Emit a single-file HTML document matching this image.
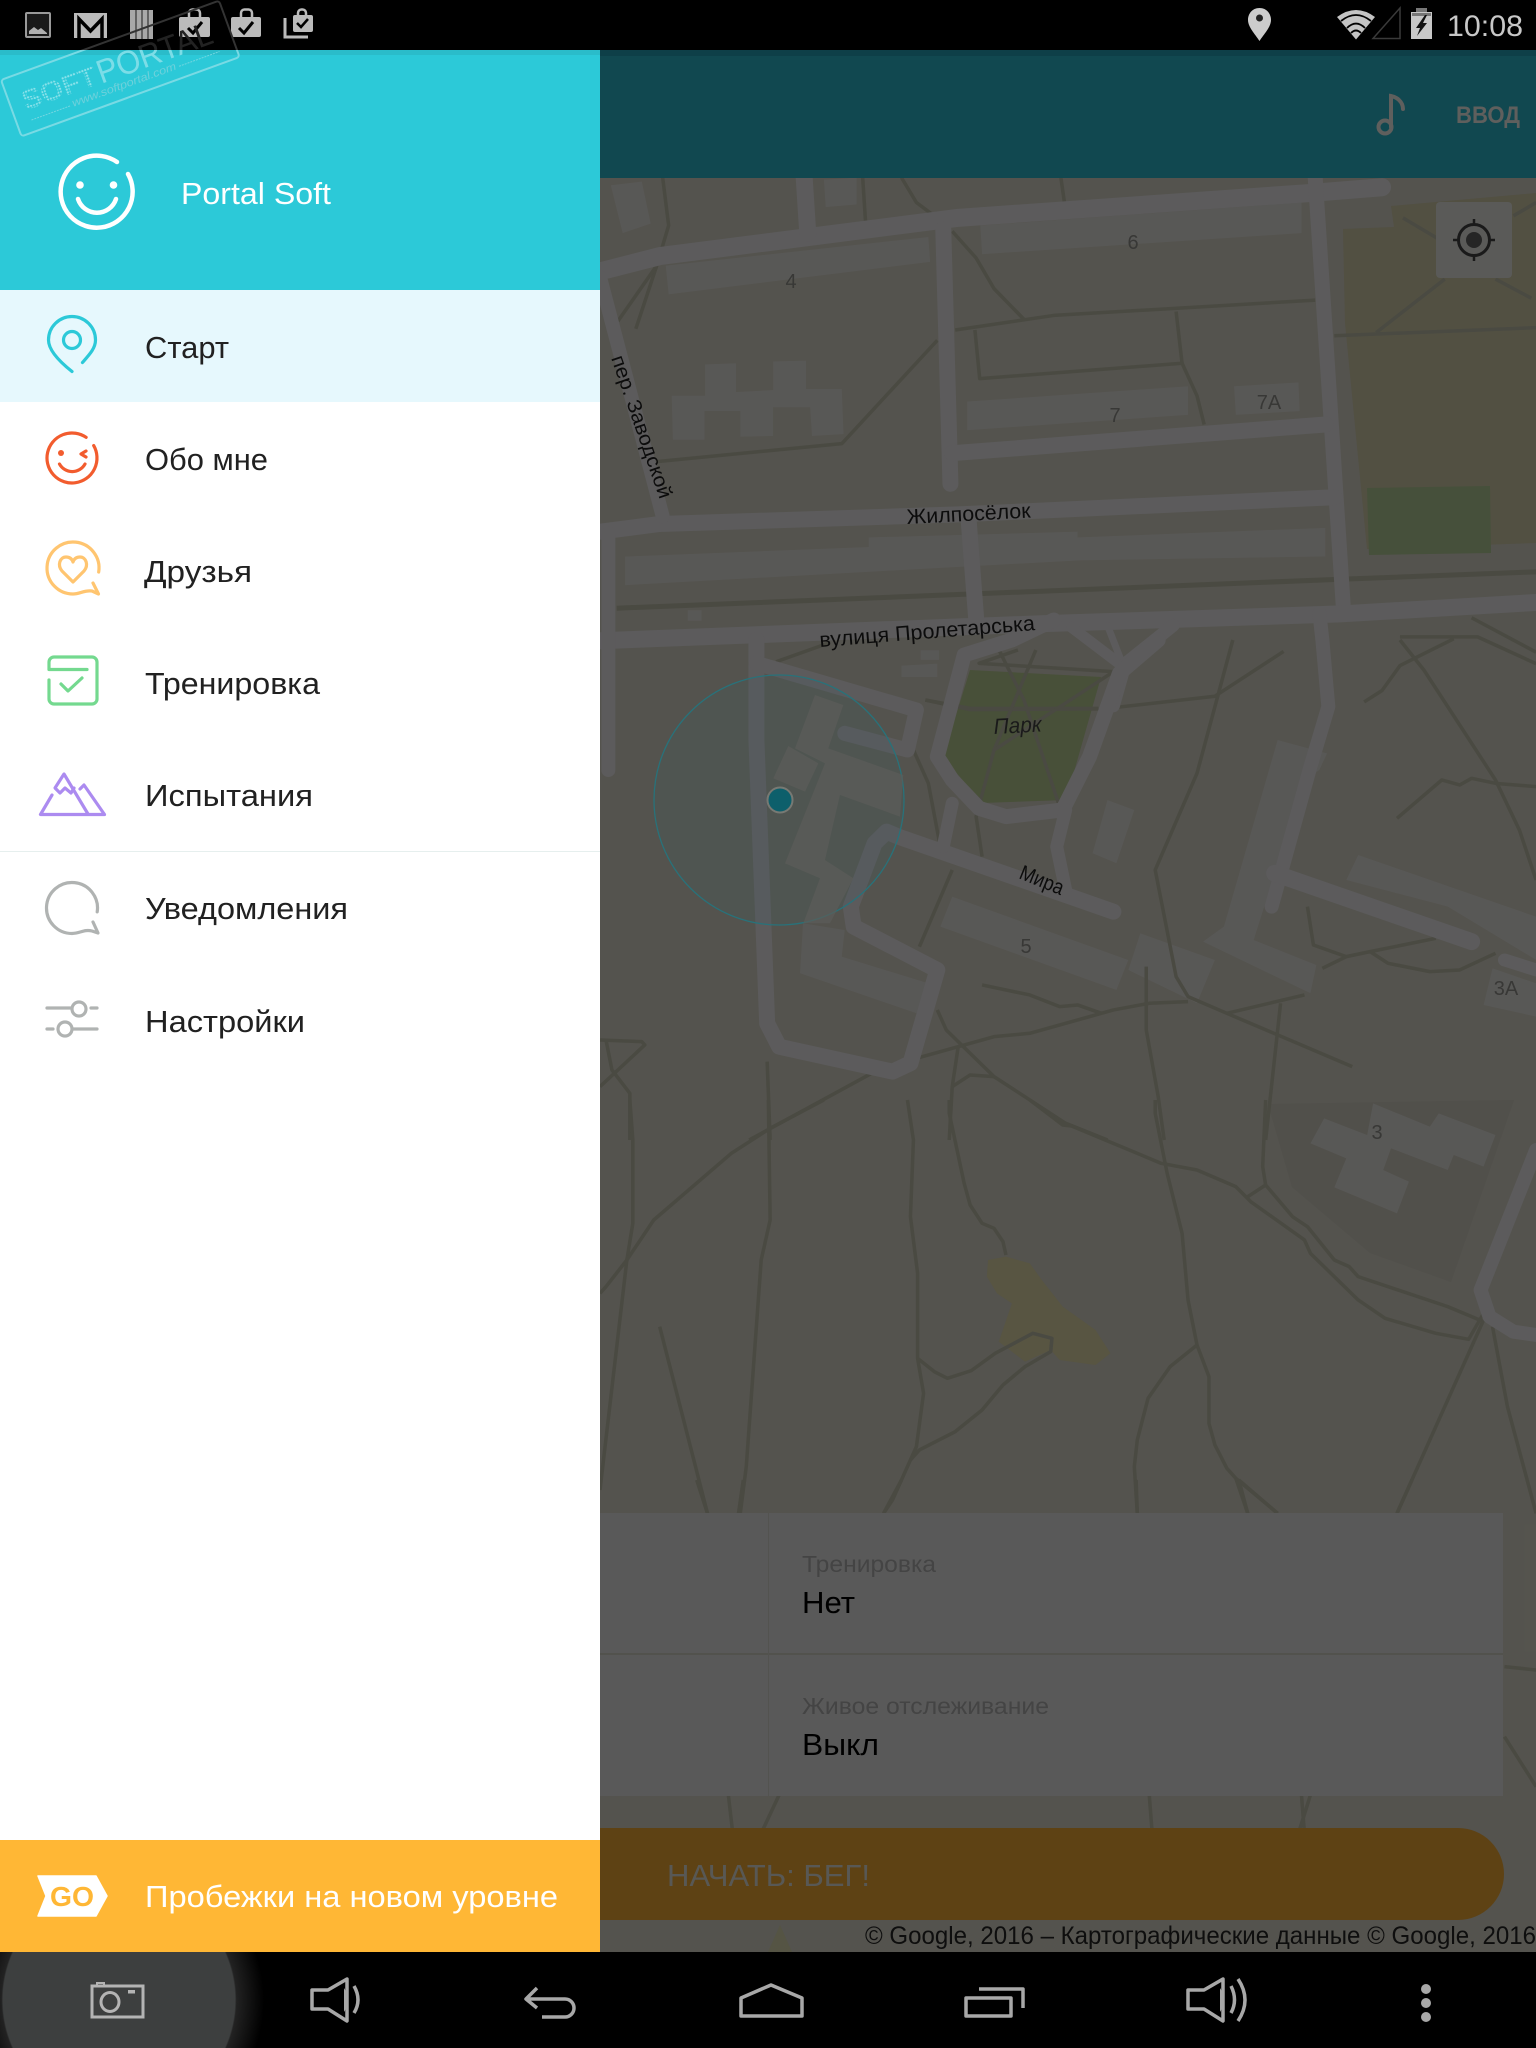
<!DOCTYPE html>
<html><head><meta charset="utf-8"><style>
html,body{margin:0;padding:0;background:#000}
svg{display:block}
text{font-family:"Liberation Sans",sans-serif}
.m polyline,.m path,.m line{fill:none;vector-effect:non-scaling-stroke;stroke-linejoin:round}
.r polyline,.r line,.r path{stroke:#676667;stroke-linecap:round}
.p polyline{stroke:#53534a;stroke-width:3.5}
.b polygon{fill:#636260}
.i{fill:#212121;font-size:31px}
</style></head><body>
<svg width="1536" height="2048" viewBox="0 0 1536 2048" xmlns="http://www.w3.org/2000/svg">
<defs>
<clipPath id="cm"><rect x="600" y="178" width="936" height="1774"/></clipPath>
<clipPath id="cn"><rect x="0" y="1952" width="1536" height="96"/></clipPath>
<clipPath id="clow"><rect x="0" y="50" width="600" height="120"/></clipPath>
<clipPath id="chigh"><rect x="0" y="0" width="600" height="50"/></clipPath>
<radialGradient id="glow" gradientUnits="userSpaceOnUse" cx="119" cy="2000" r="145">
<stop offset="0" stop-color="#3d3f3f"/><stop offset=".8" stop-color="#3d3f3f"/><stop offset=".81" stop-color="#222"/><stop offset="1" stop-color="#000"/></radialGradient>
<pattern id="dots" width="3" height="3" patternUnits="userSpaceOnUse"><rect width="3" height="3" fill="#2cc9d8"/><circle cx="1.500" cy="1.500" r="1.150" fill="#8be2ea"/></pattern>
</defs>
<rect width="1536" height="2048" fill="#000"/>

<!-- MAP -->
<g clip-path="url(#cm)" class="m">
<rect x="600" y="178" width="936" height="1774" fill="#5e5d57"/>
<polygon points="1391,206 1536,193 1536,543 1367,549 1345,323 1343,229 1394,227" fill="#5c5a4a"/>
<polygon points="1367,488 1490,486 1491,553 1369,555" fill="#4f5a42"/>
<polygon points="970,670 1101,677 1066,800 982,803 943,757" fill="#515a40"/>
<polygon points="1268,1104 1292,1187 1370,1253 1451,1282 1514,1100" fill="#5b5a54"/>

<!-- zoom 7 space -->
<g transform="translate(600,170) scale(.597,.3827)">
<g class="b">
<polygon points="637,145 1175,85 1175,165 640,220"/>
<polygon points="110,250 550,175 553,240 115,325"/>
<polygon points="120,590 176,590 176,508 228,505 228,580 290,575 290,500 345,498 345,572 405,572 408,690 355,695 352,620 290,620 290,695 235,697 235,630 175,630 175,705 122,705"/>
<polygon points="615,605 985,565 985,640 615,680"/>
<polygon points="1062,565 1170,555 1172,630 1065,640"/>
<polygon points="42,1010 450,985 450,960 800,945 800,960 1215,935 1215,1010 805,1020 450,1050 42,1085"/>
<polygon points="147,1150 170,1150 170,1178 147,1178"/>
<polygon points="505,1295 565,1290 565,1325 505,1325"/>
<polygon points="537,1255 568,1255 568,1280 537,1280"/>
<polygon points="18,40 70,30 85,140 38,165"/>
<polygon points="375,25 430,20 430,90 378,97"/>
</g>
<g class="p">
<polyline points="105,20 115,145 95,250 60,415"/>
<polyline points="95,250 30,395"/>
<polyline points="505,20 530,85 560,120"/>
<polyline points="772,20 778,85"/>
<polyline points="440,20 445,140"/>
<polyline points="590,160 630,230 660,310 710,390"/>
<polyline points="595,418 760,380 1198,340"/>
<polyline points="628,418 636,545 975,505 965,370"/>
<polyline points="975,505 1000,590 1012,665"/>
<polyline points="565,445 405,715 95,762"/>
<polyline points="1230,433 1568,412"/>
<polyline points="1345,125 1415,190"/>
<polyline points="1300,425 1415,285"/>
<polyline points="1500,285 1560,335"/>
<polyline points="1568,85 1530,120"/>
<polyline points="28,1145 1230,1070 1568,1050" style="stroke-width:5"/>
<polyline points="295,1285 385,1235"/>
<polyline points="1145,1258 1030,1375 860,1405"/>
<polyline points="545,1385 620,1410 835,1408"/>
<polyline points="1340,1220 1470,1220 1568,1290"/>
<polyline points="1430,1225 1340,1295 1310,1360 1280,1390"/>
<polyline points="1460,1170 1568,1260"/>
</g>
<g class="r">
<polyline points="0,265 100,225 600,125 1190,60 1310,45" style="stroke-width:18"/>
<line x1="342" y1="20" x2="348" y2="165" style="stroke-width:17"/>
<line x1="575" y1="155" x2="587" y2="820" style="stroke-width:16"/>
<line x1="1198" y1="20" x2="1245" y2="1140" style="stroke-width:15"/>
<polyline points="590,740 1215,665" style="stroke-width:16"/>
<polyline points="0,945 100,925 600,900 1230,855" style="stroke-width:16"/>
<line x1="0" y1="280" x2="105" y2="905" style="stroke-width:14"/>
<polyline points="0,1230 750,1185 1240,1160 1568,1130" style="stroke-width:17"/>
<line x1="617" y1="905" x2="630" y2="1170" style="stroke-width:16"/>
<line x1="14" y1="950" x2="14" y2="1568" style="stroke-width:14"/>
<polyline points="790,1195 870,1290" style="stroke-width:11"/>
<polyline points="850,1190 875,1290" style="stroke-width:7"/>
<polyline points="960,1190 880,1290 860,1400" style="stroke-width:13"/>
</g>
</g>

<!-- zoom 8 space -->
<g transform="translate(600,640) scale(.597,.3333)">
<g class="b">
<polygon points="590,770 885,960 865,1050 570,860"/>
<polygon points="850,480 895,510 865,670 825,640"/>
<polygon points="1135,300 1218,340 1205,390 1180,420 1095,900 1200,975 1190,1060 1010,905 1045,860"/>
<polygon points="1270,645 1568,830 1568,960 1420,800 1250,720"/>
<polygon points="1495,985 1568,1030 1568,1130 1480,1095"/>
<polygon points="340,850 410,870 405,950 550,1030 530,1120 335,1000"/>
<polygon points="905,880 1030,960 1000,1090 885,990"/>
</g>
<g class="p">
<polyline points="1060,0 1000,400 930,690 965,1010 985,1070 1050,1120 1260,1280"/>
<polyline points="1340,0 1380,90 1500,420 1540,570 1568,720"/>
<polyline points="1335,535 1410,420 1440,435 1460,415 1500,430 1568,440"/>
<polyline points="1185,800 1195,915 1250,950 1290,935 1400,895"/>
<polyline points="1290,935 1320,970 1390,995 1440,990 1500,940"/>
<polyline points="1210,985 1250,950"/>
<polyline points="1050,1120 1180,1065"/>
<polyline points="1140,1090 1115,1500"/>
<polyline points="0,1200 70,1205 75,1215 0,1340"/>
<polyline points="10,1200 20,1290 50,1360 50,1500"/>
<polyline points="280,1265 285,1500"/>
<polyline points="455,1300 250,1500"/>
<polyline points="530,1255 660,1190 720,1180 860,1110 920,1090 985,1085"/>
<polyline points="565,1110 580,1170 660,1310 780,1450 850,1500"/>
<polyline points="600,1220 590,1340 620,1305 660,1310"/>
<polyline points="590,1340 585,1500"/>
<polyline points="640,1035 720,1065 770,1100 800,1095 840,1120"/>
<polyline points="915,980 915,1170 935,1370 945,1500"/>
<polyline points="545,180 620,205 835,205"/>
<polyline points="660,0 710,180 770,500"/>
<polyline points="730,30 660,330"/>
<polyline points="700,30 635,70 860,95 660,330 630,530 640,650"/>
<polyline points="525,330 550,430 570,620"/>
<polyline points="590,690 535,920"/>
</g>
<g class="r">
<polyline points="262,0 262,300 280,1150 300,1220 490,1295 520,1270 565,990 425,860 420,800 460,610 480,575 500,590 860,815" style="stroke-width:16"/>
<polyline points="262,70 530,210 515,330 410,280" style="stroke-width:15"/>
<polyline points="760,-60 690,0 610,45 565,350 590,420 635,505 680,530 775,510 820,350 870,100 935,0" style="stroke-width:15"/>
<polyline points="780,510 765,620 780,750" style="stroke-width:13"/>
<polyline points="590,490 575,620" style="stroke-width:13"/>
<polyline points="1205,-80 1210,0 1220,200 1190,380 1125,800" style="stroke-width:14"/>
<polyline points="1130,700 1460,905" style="stroke-width:17"/>
<polyline points="1515,960 1568,990" style="stroke-width:13"/>
</g>
</g>

<!-- zoom 9 space -->
<g transform="translate(600,1100) scale(.597,.3333)">
<polygon points="650,480 680,470 720,490 740,540 775,620 830,690 855,760 830,795 770,780 755,750 712,785 668,725 690,610 665,580 648,530" fill="#625f4a"/>
<polygon points="1295,10 1390,80 1405,40 1500,105 1480,200 1430,165 1420,210 1325,145 1312,210 1355,245 1335,340 1230,262 1250,175 1190,130 1213,55 1285,105" fill="#636260"/>
<g class="p">
<polyline points="1115,0 1110,200 1115,255 1160,350 1185,380 1230,480 1255,500 1270,530 1420,620 1480,665"/>
<polyline points="720,0 775,75 790,78 940,190 1000,210 1065,260 1090,305 1180,420 1190,460 1270,600 1315,655 1400,700 1455,718 1480,640"/>
<polyline points="1085,290 1115,255"/>
<polyline points="930,0 930,40 950,220 975,400 985,600 1000,735 1020,830 1020,970 1030,1035 1050,1105 1065,1135 1135,1240"/>
<polyline points="1000,735 955,800 918,895 900,1020 895,1100 900,1240"/>
<polyline points="1065,1135 1085,1240"/>
<polyline points="515,0 525,120 520,350 532,520 532,775 560,815 582,835 622,812 662,760 725,700 757,715 755,755 712,800 675,855 640,930 595,995 535,1050 520,1080 490,1200 475,1240"/>
<polyline points="532,775 542,880 530,1040 520,1080"/>
<polyline points="585,0 585,40 610,250 620,315 640,370 660,385 675,425 680,465"/>
<polyline points="50,0 55,120 55,370 45,480 0,1170"/>
<polyline points="375,0 285,85 220,160 90,360 45,480 10,560 0,580"/>
<polyline points="282,0 285,360 270,480 245,1100 235,1240"/>
<polyline points="100,680 180,1240"/>
<polyline points="1480,660 1335,1240"/>
<polyline points="1495,680 1520,920 1568,1240"/>
</g>
<g class="r">
<polyline points="1568,150 1475,570 1490,650 1530,695 1568,705" style="stroke-width:14"/>
</g>
</g>

<!-- lower map bits -->
<g transform="translate(600,1480) scale(.597,.3333)" class="p">
<polyline points="162,0 180,100"/><polyline points="240,0 232,100"/>
<polyline points="505,0 475,100"/>
<polyline points="898,0 900,100"/>
<polyline points="1070,0 1085,100"/><polyline points="1070,0 1135,100"/>
<polyline points="1360,0 1335,100"/>
<polyline points="1515,560 1568,570"/>
<polyline points="1515,770 1568,920"/>
<polyline points="215,945 225,1100"/><polyline points="300,945 270,1060"/>
<polyline points="920,945 925,1060"/>
<polyline points="1175,945 1180,1060"/><polyline points="1190,945 1170,1060"/>
</g>
<polygon points="768,1952 780,1925 792,1952" fill="#5f5e4c"/>
</g>

<!-- accuracy circle -->
<circle cx="779" cy="800" r="125" fill="#3e7078" fill-opacity=".13" stroke="#2d7f88" stroke-width="1.3"/>
<g transform="translate(640,660) scale(.3333)"><polygon points="525,105 610,135 565,265 790,345 780,470 600,405 555,600 640,655 570,790 490,790 540,655 435,610 555,310 465,265" fill="#666864" fill-opacity=".7"/>
<polygon points="445,258 535,310 495,395 400,355" fill="#666864" fill-opacity=".7"/></g>
<circle cx="780" cy="800" r="12.5" fill="#0f6a78" stroke="#858781" stroke-width="2"/>

<!-- map labels -->
<g fill="#0e0e0e">
<text transform="translate(611,358) rotate(71)" font-size="20" textLength="150" lengthAdjust="spacingAndGlyphs">пер. Заводской</text>
<text transform="translate(907,524) rotate(-3)" font-size="21" textLength="124" lengthAdjust="spacingAndGlyphs">Жилпосёлок</text>
<text transform="translate(820,647) rotate(-4.5)" font-size="21" textLength="216" lengthAdjust="spacingAndGlyphs">вулиця Пролетарська</text>
<text transform="translate(1018,878) rotate(22)" font-size="21" textLength="46" lengthAdjust="spacingAndGlyphs">Мира</text>
</g>
<text transform="translate(994,734) rotate(-3)" font-size="22" font-style="italic" fill="#1e1e1e" textLength="48" lengthAdjust="spacingAndGlyphs">Парк</text>
<g fill="#3f3f3d" font-size="20" text-anchor="middle">
<text x="791" y="288">4</text><text x="1133" y="249">6</text><text x="1115" y="422">7</text><text x="1269" y="409">7А</text>
<text x="1026" y="953">5</text><text x="1506" y="995">3А</text><text x="1377" y="1139">3</text>
</g>

<!-- compass -->
<rect x="1436" y="202" width="76" height="76" rx="4" fill="#656563"/>
<circle cx="1474" cy="240" r="15.5" fill="none" stroke="#1e1e1e" stroke-width="3"/>
<circle cx="1474" cy="240" r="8" fill="#2b2b2b"/>
<path d="M1474 219V225M1474 255V261M1453 240H1459M1489 240H1495" stroke="#1e1e1e" stroke-width="2.5"/>

<!-- panel -->
<rect x="600" y="1513" width="903" height="283" fill="#646464"/>
<rect x="600" y="1653" width="903" height="2" fill="#5c5c56"/>
<rect x="768" y="1513" width="1" height="283" fill="#5d5d5a"/>
<g fill="#4c4c4c" font-size="23">
<text x="802" y="1572" textLength="134" lengthAdjust="spacingAndGlyphs">Тренировка</text>
<text x="802" y="1714" textLength="247" lengthAdjust="spacingAndGlyphs">Живое отслеживание</text>
</g>
<g fill="#000" font-size="31">
<text x="802" y="1613" textLength="53" lengthAdjust="spacingAndGlyphs">Нет</text>
<text x="802" y="1755" textLength="77" lengthAdjust="spacingAndGlyphs">Выкл</text>
</g>

<!-- start button -->
<path d="M600 1828H1458a46 46 0 0 1 0 92H600Z" fill="#694a17"/>
<text x="667" y="1886" font-size="31" fill="#63635f" textLength="203" lengthAdjust="spacingAndGlyphs">НАЧАТЬ: БЕГ!</text>
<text x="865" y="1944" font-size="25" fill="#101010" textLength="671" lengthAdjust="spacingAndGlyphs">© Google, 2016 – Картографические данные © Google, 2016</text>

<!-- app bar -->
<rect x="600" y="50" width="936" height="128" fill="#13515a"/>
<rect x="600" y="50" width="936" height="6" fill="#104751"/>
<g fill="none" stroke="#6a6a68" stroke-width="4" stroke-linecap="round">
<circle cx="1385" cy="127" r="6.5"/>
<path d="M1391 127V96C1397 97 1403 102 1403 109"/>
</g>
<text x="1456" y="123" font-size="24" font-weight="bold" fill="#6a6a68" textLength="64" lengthAdjust="spacingAndGlyphs">ВВОД</text>

<!-- dim scrim over the content behind the drawer -->
<rect x="600" y="50" width="936" height="1902" fill="#000" fill-opacity=".1"/>

<!-- DRAWER -->
<rect x="0" y="50" width="600" height="240" fill="#2cc9d8"/>
<rect x="0" y="50" width="600" height="5" fill="#2abcca"/>
<rect x="0" y="290" width="600" height="112" fill="#e6f8fd"/>
<rect x="0" y="402" width="600" height="1438" fill="#fff"/>
<rect x="0" y="851" width="600" height="1" fill="#e6efee"/>

<g fill="none" stroke="#fff" stroke-width="4.5" stroke-linecap="round">
<path d="M117 162A36 36 0 1 0 128 174"/>
<path d="M78 199A20 20 0 0 0 116 199"/>
</g>
<circle cx="80" cy="185" r="3.8" fill="#fff"/><circle cx="113.5" cy="185" r="3.8" fill="#fff"/>
<text x="181" y="204" font-size="31" fill="#fff" textLength="150" lengthAdjust="spacingAndGlyphs">Portal Soft</text>

<!-- items -->
<g fill="none" stroke-linecap="round" stroke-linejoin="round" stroke-width="3.2">
<g stroke="#2cc9d8">
<path d="M82.5 362.5C90 354 95.5 348 95.5 340A23.5 23.5 0 0 0 48.500 340C48.500 350 60 362 72 371.500"/>
<circle cx="72" cy="340" r="8.500"/>
</g>
<g stroke="#f25c2e">
<path d="M86.100 437.350A25 25 0 1 0 93.700 445.600"/>
<path d="M59.500 464A14.500 14.500 0 0 0 85 464"/>
<path d="M86 451L81 454L86 457"/>
</g>
<circle cx="61" cy="453" r="3" fill="#f25c2e"/>
<g stroke="#ffc570">
<path d="M98.700 572A26 26 0 1 0 73 594C80 594 84 590 92 591L98.500 594L93 583"/>
<path d="M73 582L62 571C57 565 60 557 66 557C70 557 72 559 73 562C74 559 76 557 80 557C86 557 89 565 84 571Z"/>
</g>
<g stroke="#74d98f">
<path d="M49 669V662a5 5 0 0 1 5-5H92a5 5 0 0 1 5 5V699a5 5 0 0 1-5 5H54a5 5 0 0 1-5-5V680"/>
<path d="M49 669.500H87"/>
<path d="M61 684L68 691L82 678"/>
</g>
<g stroke="#ac8bf0">
<path d="M52 795L40.500 814.500H104.500L84 785L80 789"/>
<path d="M88 814L64 774L55 788L60 793L65 788L71 793L74 788"/>
</g>
<g stroke="#b0b3b2">
<path d="M97.200 911.900A25.500 25.500 0 1 0 72 933.500C80 933.500 84 929 92 931L98 933L93 922"/>
<path d="M47 1008H71M91 1008H97M47 1029H53M73 1029H97"/>
<circle cx="79" cy="1009" r="7"/><circle cx="65" cy="1029" r="7"/>
</g>
</g>
<text class="i" x="145" y="358" textLength="84" lengthAdjust="spacingAndGlyphs">Старт</text>
<text class="i" x="145" y="470" textLength="123" lengthAdjust="spacingAndGlyphs">Обо мне</text>
<text class="i" x="144" y="582" textLength="108" lengthAdjust="spacingAndGlyphs">Друзья</text>
<text class="i" x="145" y="694" textLength="175" lengthAdjust="spacingAndGlyphs">Тренировка</text>
<text class="i" x="145" y="806" textLength="168" lengthAdjust="spacingAndGlyphs">Испытания</text>
<text class="i" x="145" y="919" textLength="203" lengthAdjust="spacingAndGlyphs">Уведомления</text>
<text class="i" x="145" y="1032" textLength="160" lengthAdjust="spacingAndGlyphs">Настройки</text>

<!-- promo -->
<rect x="0" y="1840" width="600" height="112" fill="#ffb735"/>
<path d="M38 1876H96L107 1896L96 1916H38L46 1896Z" fill="#fff" stroke="#fff" stroke-width="1.500" stroke-linejoin="round"/>
<text x="50" y="1906" font-size="28" font-weight="bold" fill="#ffb735" textLength="44" lengthAdjust="spacingAndGlyphs">GO</text>
<text x="145" y="1907" font-size="31" fill="#fff" textLength="413" lengthAdjust="spacingAndGlyphs">Пробежки на новом уровне</text>

<!-- status bar icons -->
<rect x="0" y="0" width="1536" height="50" fill="#000"/>
<rect x="26" y="13" width="24" height="24" rx="1" fill="#1a1a1a" stroke="#9a9a9a" stroke-width="2"/>
<path d="M29 34V31L34 27L38 30L41 28L47 33V34Z" fill="#b0b0b0"/>
<rect x="74" y="13" width="33" height="25" fill="#bbb"/>
<path d="M79 38V19L90.500 31L102 19V38" fill="none" stroke="#000" stroke-width="3.500"/>
<rect x="130" y="10" width="23" height="29" fill="#a8a8a8"/>
<path d="M136 10V39M142 10V39M148 10V39" stroke="#333" stroke-width="1.200"/>
<g fill="none" stroke="#bbb" stroke-width="2.500">
<path d="M189 17V13a3.500 3.500 0 0 1 3.500-3.500h4a3.500 3.500 0 0 1 3.500 3.500V17"/>
<path d="M241 17V13a3.500 3.500 0 0 1 3.500-3.500h4a3.500 3.500 0 0 1 3.500 3.500V17"/>
<path d="M298 17V13a3.500 3.500 0 0 1 3.500-3.500h1a3.500 3.500 0 0 1 3.500 3.500V17"/>
<path d="M285 18V37H308" stroke-width="3"/>
</g>
<rect x="179" y="17" width="31" height="20" rx="2" fill="#bbb"/>
<rect x="231" y="17" width="30" height="20" rx="2" fill="#bbb"/>
<rect x="293" y="15" width="20" height="17" rx="2" fill="#bbb"/>
<g fill="none" stroke="#000" stroke-width="3">
<path d="M188 28L193 33L202 22"/><path d="M239 28L244 33L253 22"/><path d="M297 23L301 27L308 19" stroke-width="2.500"/>
</g>
<path d="M1259.500 8C1252 8 1248 14 1248 20C1248 27 1255 34 1259.500 41C1264 34 1271 27 1271 20C1271 14 1267 8 1259.500 8Z" fill="#ccc"/>
<circle cx="1259.500" cy="18" r="3.500" fill="#222"/>
<path d="M1356 39.500L1337 17Q1356 3 1375 17Z" fill="#c4c4c4"/>
<g fill="none" stroke="#000" stroke-width="1.800">
<path d="M1341 21Q1356 9 1371 21"/><path d="M1347 28Q1356 19 1365 28"/><path d="M1351 33Q1356 28 1361 33"/>
</g>
<path d="M1373 38.500L1400 8V38.500Z" fill="none" stroke="#3a3a3a" stroke-width="1.500"/>
<rect x="1416" y="8" width="11" height="5" fill="#777"/>
<rect x="1411" y="12" width="21" height="27" fill="#c8c8c8"/>
<rect x="1412" y="13" width="19" height="3" fill="#777"/>
<path d="M1425 15L1416 28H1420L1417 36L1427 23H1423L1427 15Z" fill="#111"/>
<text x="1447" y="36" font-size="30" fill="#c8c8c8" textLength="76" lengthAdjust="spacingAndGlyphs">10:08</text>

<!-- watermark -->
<g clip-path="url(#clow)"><g transform="translate(1,80) rotate(-20)">
<rect x="0" y="0" width="232" height="60" rx="3" fill="none" stroke="#79dae4" stroke-width="2"/>
<text x="13" y="37" font-size="28" font-weight="bold" fill="url(#dots)" textLength="78" lengthAdjust="spacingAndGlyphs">SOFT</text>
<text x="93" y="38" font-size="33" fill="#7cdde7" textLength="121" lengthAdjust="spacingAndGlyphs">PORTAL</text>
<text x="59" y="50" font-size="11" font-style="italic" fill="#6ed1db" textLength="110" lengthAdjust="spacingAndGlyphs">www.softportal.com</text>
<path d="M15 48H56M172 48H215" stroke="#73d6e0" stroke-width="1" stroke-dasharray="2 1"/>
</g></g>
<g clip-path="url(#chigh)"><g transform="translate(1,80) rotate(-20)">
<rect x="0" y="0" width="232" height="60" rx="3" fill="none" stroke="#333" stroke-width="2"/>
<text x="93" y="38" font-size="33" fill="#222" textLength="121" lengthAdjust="spacingAndGlyphs">PORTAL</text>
</g></g>

<!-- nav bar -->
<g clip-path="url(#cn)"><circle cx="119" cy="2000" r="145" fill="url(#glow)"/></g>
<g fill="none" stroke="#b4b4b4" stroke-width="3">
<rect x="92" y="1986" width="51" height="31"/>
<path d="M97 1986V1983H104V1986" stroke-width="2"/>
<ellipse cx="110" cy="2002" rx="9" ry="9.500"/>
</g>
<rect x="128" y="1990" width="7" height="3.500" fill="#b4b4b4"/>
<g fill="none" stroke="#a8a8a8" stroke-width="3.500" stroke-linejoin="round">
<path d="M347 1979L328 1990H312V2009H328L347 2021Z"/>
<path d="M354 1986Q362 2000 354 2013"/>
<path d="M537 1988L526 1999L537 2008M526 1999H565A9 9 0 0 1 565 2017H542"/>
<path d="M741 1998L771 1985L802 1998V2016H741Z"/>
<path d="M966 1998H1011V2016H966Z"/>
<path d="M979 1989H1023V2008"/>
<path d="M1223 1979L1204 1990H1188V2009H1204L1223 2021Z"/>
<path d="M1231 1986Q1238 2000 1231 2013"/>
<path d="M1238 1979Q1252 2000 1238 2021"/>
</g>
<path d="M344 1988Q352 2000 344 2012Z" fill="#a8a8a8"/>
<path d="M1220 1988Q1228 2000 1220 2012Z" fill="#a8a8a8"/>
<circle cx="1426" cy="1989" r="5" fill="#a8a8a8"/><circle cx="1426" cy="2003" r="5" fill="#a8a8a8"/><circle cx="1426" cy="2017" r="5" fill="#a8a8a8"/>
</svg>
</body></html>
